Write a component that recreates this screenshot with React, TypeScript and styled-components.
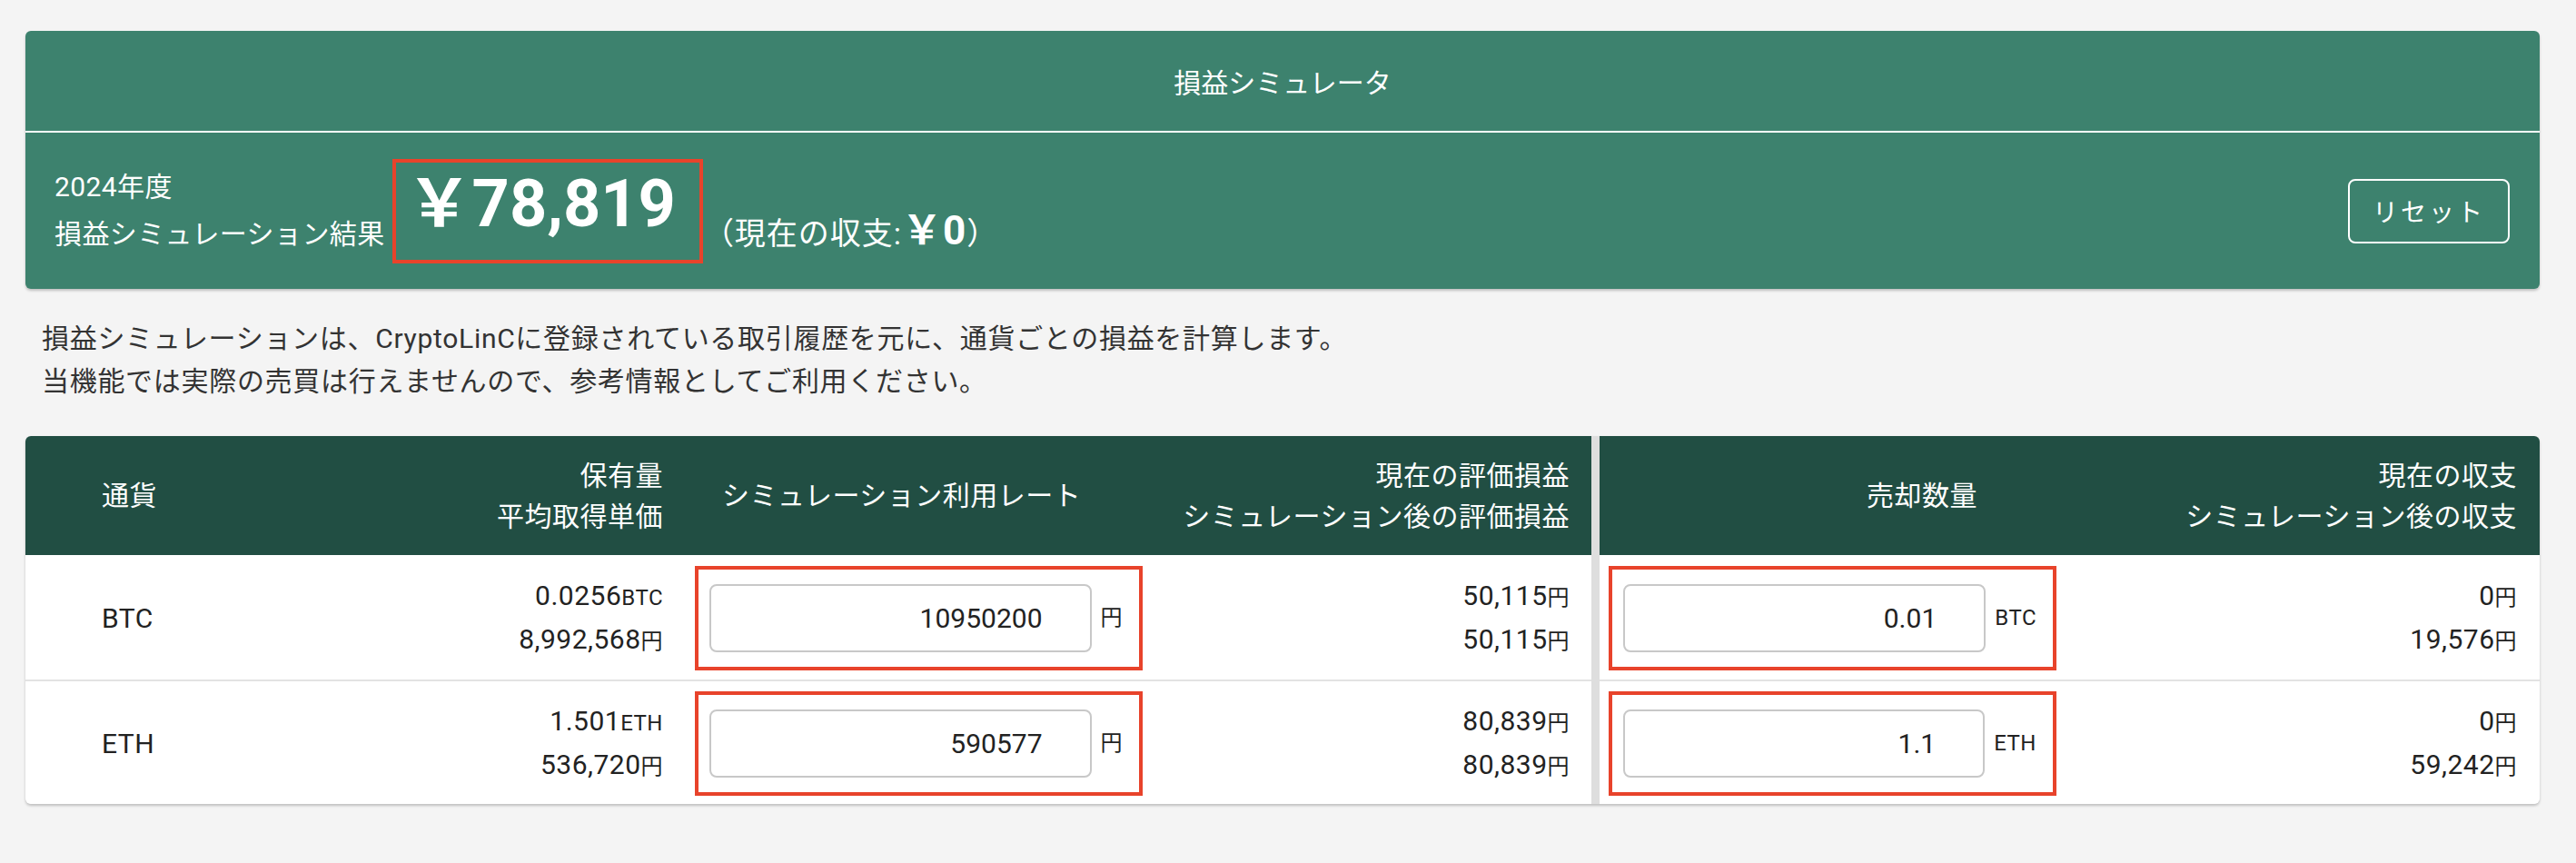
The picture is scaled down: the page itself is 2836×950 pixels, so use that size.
import React from "react";
import styled, { createGlobalStyle } from "styled-components";

const GlobalStyle = createGlobalStyle`
  html, body {
    margin: 0;
    padding: 0;
    background: #f4f4f4;
  }
  body {
    font-family: Roboto, "Noto Sans CJK JP", sans-serif;
    color: #222;
  }
`;

interface Row {
  symbol: string;
  amount: string;
  avgPrice: string;
  rate: string;
  evalNow: string;
  evalAfter: string;
  sellQty: string;
  incomeNow: string;
  incomeAfter: string;
}

const rows: Row[] = [
  {
    symbol: "BTC",
    amount: "0.0256",
    avgPrice: "8,992,568",
    rate: "10950200",
    evalNow: "50,115",
    evalAfter: "50,115",
    sellQty: "0.01",
    incomeNow: "0",
    incomeAfter: "19,576",
  },
  {
    symbol: "ETH",
    amount: "1.501",
    avgPrice: "536,720",
    rate: "590577",
    evalNow: "80,839",
    evalAfter: "80,839",
    sellQty: "1.1",
    incomeNow: "0",
    incomeAfter: "59,242",
  },
];

function App() {
  return (
    <Page>
      <GlobalStyle />
      <SimCard>
        <TitleBar>損益シミュレータ</TitleBar>
        <ResultBar>
          <ResultLabel>
            <span>2024年度</span>
            <span>損益シミュレーション結果</span>
          </ResultLabel>
          <AmountBox>
            <Amount>￥78,819</Amount>
          </AmountBox>
          <Current>
            （現在の収支:<strong>￥0</strong>）
          </Current>
          <ResetButton type="button">リセット</ResetButton>
        </ResultBar>
      </SimCard>

      <Description>
        損益シミュレーションは、CryptoLinCに登録されている取引履歴を元に、通貨ごとの損益を計算します。
        <br />
        当機能では実際の売買は行えませんので、参考情報としてご利用ください。
      </Description>

      <TableCard>
        <Panel>
          <HeadRow $cols={leftCols}>
            <Cell $pl={84}>通貨</Cell>
            <Cell $align="right" $pr={24}>
              <div>保有量</div>
              <div>平均取得単価</div>
            </Cell>
            <Cell $pl={41}>シミュレーション利用レート</Cell>
            <Cell $align="right" $pr={24}>
              <div>現在の評価損益</div>
              <div>シミュレーション後の評価損益</div>
            </Cell>
          </HeadRow>
          {rows.map((r) => (
            <BodyRow key={r.symbol} $cols={leftCols}>
              <Cell $pl={84}>{r.symbol}</Cell>
              <Cell $align="right" $pr={24}>
                <div>
                  {r.amount}
                  <Unit>{r.symbol}</Unit>
                </div>
                <div>
                  {r.avgPrice}
                  <Unit>円</Unit>
                </div>
              </Cell>
              <Cell $pl={11}>
                <InputBox>
                  <NumInput type="text" defaultValue={r.rate} />
                  <Unit>円</Unit>
                </InputBox>
              </Cell>
              <Cell $align="right" $pr={24}>
                <div>
                  {r.evalNow}
                  <Unit>円</Unit>
                </div>
                <div>
                  {r.evalAfter}
                  <Unit>円</Unit>
                </div>
              </Cell>
            </BodyRow>
          ))}
        </Panel>

        <Panel>
          <HeadRow $cols={rightCols}>
            <Cell $pl={294}>売却数量</Cell>
            <Cell $align="right" $pr={25}>
              <div>現在の収支</div>
              <div>シミュレーション後の収支</div>
            </Cell>
          </HeadRow>
          {rows.map((r) => (
            <BodyRow key={r.symbol} $cols={rightCols}>
              <Cell $pl={10}>
                <InputBox>
                  <NumInput type="text" defaultValue={r.sellQty} />
                  <Unit>{r.symbol}</Unit>
                </InputBox>
              </Cell>
              <Cell $align="right" $pr={25}>
                <div>
                  {r.incomeNow}
                  <Unit>円</Unit>
                </div>
                <div>
                  {r.incomeAfter}
                  <Unit>円</Unit>
                </div>
              </Cell>
            </BodyRow>
          ))}
        </Panel>
      </TableCard>
    </Page>
  );
}

export default App;

const leftCols = "372px 354px 536px minmax(0, 1fr)";
const rightCols = "600px minmax(0, 1fr)";

const Page = styled.div`
  padding: 34px 40px 40px 28px;
`;

const SimCard = styled.section`
  background: #3d826e;
  border-radius: 6px;
  box-shadow: 0 2px 3px rgba(0, 0, 0, 0.22);
  color: #fff;
  overflow: hidden;
`;

const TitleBar = styled.h1`
  margin: 0;
  height: 110px;
  display: flex;
  align-items: center;
  justify-content: center;
  font-size: 30px;
  font-weight: 400;
  border-bottom: 2px solid #fff;
`;

const ResultBar = styled.div`
  height: 172px;
  display: flex;
  align-items: center;
  padding: 0 33px 0 32px;
`;

const ResultLabel = styled.div`
  display: flex;
  flex-direction: column;
  font-size: 30px;
  line-height: 52px;
  letter-spacing: 0.4px;
`;

const AmountBox = styled.div`
  box-sizing: border-box;
  height: 115px;
  margin-left: 8px;
  padding: 0 26px 14px 12px;
  display: flex;
  align-items: center;
  border: 4px solid #e8432b;
`;

const Amount = styled.span`
  font-size: 72px;
  font-weight: 700;
  line-height: 1;
`;

const Current = styled.span`
  margin: 44px 0 0 0;
  font-size: 34px;
  line-height: 1;
  letter-spacing: 1px;

  strong {
    font-size: 44px;
    font-weight: 700;
  }
`;

const ResetButton = styled.button`
  margin-left: auto;
  width: 178px;
  height: 71px;
  border: 2px solid #fff;
  border-radius: 8px;
  background: transparent;
  color: #fff;
  font-family: Roboto, "Noto Sans CJK JP", sans-serif;
  font-size: 28px;
  letter-spacing: 3px;
  cursor: pointer;
`;

const Description = styled.p`
  margin: 31px 0 0 18px;
  font-size: 30px;
  line-height: 47px;
  letter-spacing: 0.7px;
  color: #333;
`;

const TableCard = styled.div`
  margin-top: 37px;
  display: grid;
  grid-template-columns: 1724px minmax(0, 1fr);
  column-gap: 9px;
  background: #dedede;
  border-radius: 6px;
  overflow: hidden;
  box-shadow: 0 2px 3px rgba(0, 0, 0, 0.22);
  letter-spacing: 0.5px;
`;

const Panel = styled.div`
  background: #fff;
`;

const HeadRow = styled.div<{ $cols: string }>`
  display: grid;
  grid-template-columns: ${(p) => p.$cols};
  height: 131px;
  background: #214e43;
  color: #fff;
  font-size: 30px;
  line-height: 45px;
`;

const BodyRow = styled.div<{ $cols: string }>`
  display: grid;
  grid-template-columns: ${(p) => p.$cols};
  height: 137px;
  padding-top: 2px;
  box-sizing: border-box;
  font-size: 30px;
  line-height: 45px;
  color: #222;

  & + & {
    border-top: 2px solid #e3e3e3;
  }
`;

const Cell = styled.div<{ $align?: "left" | "right" | "center"; $pl?: number; $pr?: number }>`
  display: flex;
  flex-direction: column;
  justify-content: center;
  align-items: ${(p) =>
    p.$align === "right" ? "flex-end" : p.$align === "center" ? "center" : "flex-start"};
  padding-left: ${(p) => p.$pl ?? 0}px;
  padding-right: ${(p) => p.$pr ?? 0}px;
  white-space: nowrap;
`;

const Unit = styled.span`
  font-size: 24px;
`;

const InputBox = styled.div`
  box-sizing: border-box;
  width: 493px;
  height: 115px;
  padding: 0 18px 0 12px;
  display: flex;
  align-items: center;
  gap: 10px;
  border: 4px solid #e8432b;
`;

const NumInput = styled.input`
  flex: 1;
  min-width: 0;
  box-sizing: border-box;
  height: 75px;
  padding: 0 52px 0 16px;
  border: 2px solid #c8c8c8;
  border-radius: 8px;
  background: #fff;
  font-family: Roboto, "Noto Sans CJK JP", sans-serif;
  font-size: 30px;
  letter-spacing: 0;
  color: #222;
  text-align: right;
  outline: none;
`;
